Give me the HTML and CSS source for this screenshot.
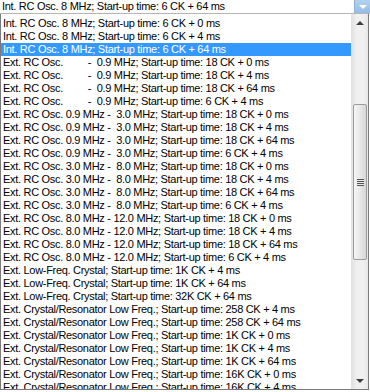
FILE: index.html
```html
<!DOCTYPE html>
<html lang="en">
<head>
    <meta charset="UTF-8">
    <title>Clock source</title>
    <link rel="stylesheet" href="styles.css">
</head>
<body>
    <div class="combo">
        <div class="combo-text">Int. RC Osc. 8 MHz; Start-up time: 6 CK + 64 ms</div>
        <div class="combo-btn"><span class="tri-down white"></span></div>
    </div>

    <div class="dropdown">
        <ul class="options">
            <li>Int. RC Osc. 8 MHz; Start-up time: 6 CK + 0 ms</li>
            <li>Int. RC Osc. 8 MHz; Start-up time: 6 CK + 4 ms</li>
            <li class="selected">Int. RC Osc. 8 MHz; Start-up time: 6 CK + 64 ms</li>
            <li>Ext. RC Osc.         -  0.9 MHz; Start-up time: 18 CK + 0 ms</li>
            <li>Ext. RC Osc.         -  0.9 MHz; Start-up time: 18 CK + 4 ms</li>
            <li>Ext. RC Osc.         -  0.9 MHz; Start-up time: 18 CK + 64 ms</li>
            <li>Ext. RC Osc.         -  0.9 MHz; Start-up time: 6 CK + 4 ms</li>
            <li>Ext. RC Osc. 0.9 MHz -  3.0 MHz; Start-up time: 18 CK + 0 ms</li>
            <li>Ext. RC Osc. 0.9 MHz -  3.0 MHz; Start-up time: 18 CK + 4 ms</li>
            <li>Ext. RC Osc. 0.9 MHz -  3.0 MHz; Start-up time: 18 CK + 64 ms</li>
            <li>Ext. RC Osc. 0.9 MHz -  3.0 MHz; Start-up time: 6 CK + 4 ms</li>
            <li>Ext. RC Osc. 3.0 MHz -  8.0 MHz; Start-up time: 18 CK + 0 ms</li>
            <li>Ext. RC Osc. 3.0 MHz -  8.0 MHz; Start-up time: 18 CK + 4 ms</li>
            <li>Ext. RC Osc. 3.0 MHz -  8.0 MHz; Start-up time: 18 CK + 64 ms</li>
            <li>Ext. RC Osc. 3.0 MHz -  8.0 MHz; Start-up time: 6 CK + 4 ms</li>
            <li>Ext. RC Osc. 8.0 MHz - 12.0 MHz; Start-up time: 18 CK + 0 ms</li>
            <li>Ext. RC Osc. 8.0 MHz - 12.0 MHz; Start-up time: 18 CK + 4 ms</li>
            <li>Ext. RC Osc. 8.0 MHz - 12.0 MHz; Start-up time: 18 CK + 64 ms</li>
            <li>Ext. RC Osc. 8.0 MHz - 12.0 MHz; Start-up time: 6 CK + 4 ms</li>
            <li>Ext. Low-Freq. Crystal; Start-up time: 1K CK + 4 ms</li>
            <li>Ext. Low-Freq. Crystal; Start-up time: 1K CK + 64 ms</li>
            <li>Ext. Low-Freq. Crystal; Start-up time: 32K CK + 64 ms</li>
            <li>Ext. Crystal/Resonator Low Freq.; Start-up time: 258 CK + 4 ms</li>
            <li>Ext. Crystal/Resonator Low Freq.; Start-up time: 258 CK + 64 ms</li>
            <li>Ext. Crystal/Resonator Low Freq.; Start-up time: 1K CK + 0 ms</li>
            <li>Ext. Crystal/Resonator Low Freq.; Start-up time: 1K CK + 4 ms</li>
            <li>Ext. Crystal/Resonator Low Freq.; Start-up time: 1K CK + 64 ms</li>
            <li>Ext. Crystal/Resonator Low Freq.; Start-up time: 16K CK + 0 ms</li>
            <li>Ext. Crystal/Resonator Low Freq.; Start-up time: 16K CK + 4 ms</li>
        </ul>

        <div class="scrollbar">
            <div class="sb-btn"><span class="tri-up"></span></div>
            <div class="sb-track">
                <div class="sb-thumb">
                    <span class="grip"></span>
                </div>
            </div>
            <div class="sb-btn"><span class="tri-down"></span></div>
        </div>
    </div>
</body>
</html>
```

FILE: styles.css
```css
body {
    margin: 0;
    padding: 0;
    font-family: 'Liberation Sans', Arial, sans-serif;
    font-size: 11px;
    letter-spacing: -0.3px;
    color: #000;
    background: #fff;
    width: 370px;
    height: 392px;
    overflow: hidden;
}

.combo {
    display: flex;
    height: 13px;
    border-bottom: 1px solid #b5b5b5;
}

.combo-text {
    flex: 1;
    padding-left: 2px;
    line-height: 12px;
    white-space: nowrap;
    overflow: hidden;
    border-right: 1px solid #8fb3d8;
}

.combo-btn {
    width: 15px;
    background: linear-gradient(#b4d1ee, #95bde6);
    display: flex;
    align-items: center;
    justify-content: center;
}

.tri-down {
    width: 0;
    height: 0;
    border-left: 4px solid transparent;
    border-right: 4px solid transparent;
    border-top: 4px solid #3c3c3c;
}

.tri-down.white {
    border-top-color: #fff;
}

.tri-up {
    width: 0;
    height: 0;
    border-left: 4px solid transparent;
    border-right: 4px solid transparent;
    border-bottom: 4px solid #3c3c3c;
}

.dropdown {
    display: flex;
    height: 375px;
    border: 1px solid #7a7a7a;
    border-top: none;
    margin-right: 1px;
}

.options {
    flex: 1;
    list-style: none;
    margin: 0;
    padding: 3px 0 0;
    overflow: hidden;
}

.options li {
    height: 13px;
    line-height: 13px;
    padding-left: 2px;
    white-space: pre;
}

.options li.selected {
    background: #3399ff;
    color: #fff;
}

.scrollbar {
    width: 16px;
    display: flex;
    flex-direction: column;
    background: linear-gradient(90deg, #e2e2e2, #f0f0f0 30%, #f0f0f0 70%, #e6e6e6);
    border-left: 1px solid #e4e4e4;
}

.sb-btn {
    height: 17px;
    display: flex;
    align-items: center;
    justify-content: center;
}

.sb-track {
    flex: 1;
    padding-top: 73px;
}

.sb-thumb {
    height: 154px;
    margin: 0 1px;
    border: 1px solid #9b9b9b;
    border-radius: 2px;
    background: linear-gradient(90deg, #f5f5f5, #e8e8e8 50%, #d6d6d6);
    display: flex;
    align-items: center;
    justify-content: center;
}

.grip {
    width: 7px;
    height: 7px;
    background: repeating-linear-gradient(#555 0 1px, #e8e8e8 1px 2px);
}
```
